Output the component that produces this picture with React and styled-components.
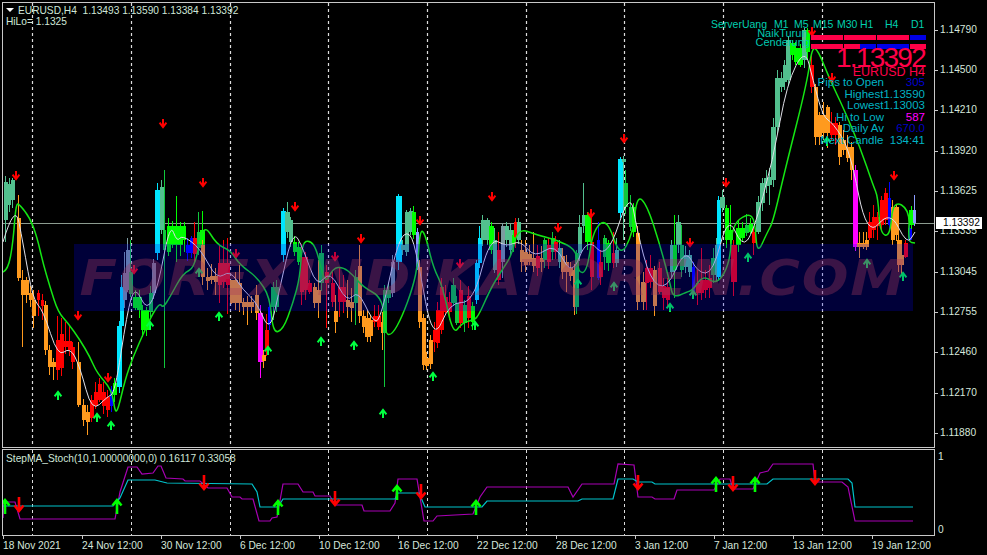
import React from 'react';
import styled, { createGlobalStyle } from 'styled-components';

const GlobalStyle = createGlobalStyle`
  html, body {
    margin: 0;
    background: #000;
    overflow: hidden;
  }
`;

const UI_FONT = '"Liberation Sans", Arial, sans-serif';

const Terminal = styled.div`
  width: 987px;
  height: 555px;
  padding: 2px 0 0 2px;
  box-sizing: border-box;
  background: #000;
  font-family: ${UI_FONT};
  font-size: 10.2px;
  color: #d6e6dc;
  display: flex;
  flex-direction: column;
`;

const PaneRow = styled.div`
  display: flex;
  margin-bottom: 1px;
`;

const Pane = styled.div`
  position: relative;
  width: 933px;
  height: ${(p) => p.$height}px;
  box-sizing: border-box;
  border: 1px solid #c8c8c8;
  overflow: hidden;
  svg {
    display: block;
  }
`;

const PriceAxis = styled.div`
  position: relative;
  height: 446px;
  padding-top: 7.85px;
  box-sizing: border-box;
  display: flex;
  flex-direction: column;
`;

const PriceTick = styled.div`
  position: relative;
  flex: none;
  height: 40.3px;
  line-height: 40.3px;
  padding-left: 5px;
  &::before {
    content: '';
    position: absolute;
    left: 0;
    top: 20px;
    width: 3px;
    height: 1px;
    background: #c8c8c8;
  }
`;

const CurrentPrice = styled.div`
  position: absolute;
  left: 1px;
  top: 215px;
  width: 46px;
  height: 12px;
  line-height: 12px;
  padding-left: 7px;
  box-sizing: border-box;
  background: #fff;
  color: #000;
`;

const SubAxis = styled.div`
  padding: 2px 0 0 3px;
  height: 87px;
  box-sizing: border-box;
  display: flex;
  flex-direction: column;
  justify-content: space-between;
  line-height: 12px;
`;

const TimeAxis = styled.div`
  display: grid;
  grid-template-columns: repeat(12, 79px);
  padding-left: 1px;
  margin-top: -1px;
`;

const TimeTick = styled.div`
  position: relative;
  padding-top: 3px;
  line-height: 13px;
  white-space: nowrap;
  &::before {
    content: '';
    position: absolute;
    left: 0;
    top: 0;
    width: 1px;
    height: 3px;
    background: #c8c8c8;
  }
`;

const Legend = styled.div`
  position: absolute;
  left: ${(p) => p.$left}px;
  top: ${(p) => p.$top}px;
  line-height: 12px;
  white-space: pre;
  color: #cfe6d8;
`;

const Caret = styled.span`
  display: inline-block;
  width: 0;
  height: 0;
  margin: 0 4px 2px 0;
  border-left: 4px solid transparent;
  border-right: 4px solid transparent;
  border-top: 4px solid #fff;
`;

const Band = styled.div`
  position: absolute;
  left: 71px;
  top: 241px;
  width: 839px;
  height: 67px;
  background: rgba(0, 0, 240, 0.24);
  display: flex;
  align-items: center;
  justify-content: center;
  overflow: hidden;
`;

const Watermark = styled.span`
  font-family: "DejaVu Sans", sans-serif;
  font-weight: 700;
  font-style: italic;
  font-size: 50px;
  letter-spacing: 1.6px;
  white-space: nowrap;
  transform: scaleX(1.1);
  color: rgba(165, 57, 94, 0.35);
`;

const Dashboard = styled.div`
  position: absolute;
  right: 9px;
  top: 17px;
  width: 216px;
  display: flex;
  flex-direction: column;
  align-items: flex-end;
  font-size: 11.5px;
  line-height: 11.6px;
  color: #00b4c4;
`;

const TimeframeRow = styled.div`
  display: grid;
  grid-template-columns: 63px 20px 19px 24px 23px 25px 26px auto;
  width: 211px;
  margin-right: 3px;
  font-size: 10.5px;
  line-height: 9px;
  color: #00d0b0;
`;

const SignalRow = styled.div`
  display: flex;
  align-items: flex-start;
  height: 8.5px;
  line-height: 8.5px;
  margin-right: -1px;
`;

const SignalName = styled.span`
  width: 52px;
  margin-right: 3px;
  font-size: 11px;
  color: #00c8b0;
  text-align: right;
  white-space: nowrap;
`;

const SignalCell = styled.span`
  width: 16px;
  height: 5px;
  margin: 6px 0.5px 0 0;
  background: ${(p) => (p.$up ? '#0000e6' : '#ff0048')};
`;

const BigPrice = styled.div`
  font-size: 28px;
  line-height: 18.5px;
  letter-spacing: -1.75px;
  margin-top: 2.5px;
  color: #ff0048;
`;

const PairName = styled.div`
  font-size: 12.5px;
  line-height: 10px;
  color: #ff0048;
`;

const StatRow = styled.div`
  display: flex;
  justify-content: flex-end;
  white-space: pre;
`;

const StatValue = styled.span`
  width: 41px;
  text-align: right;
  color: ${(p) => p.$color || 'inherit'};
`;

const COL = {
  s: '#52c08e',
  o: '#ff9a1e',
  r: '#ff0000',
  L: '#00ff00',
  g: '#10c83c',
  c: '#00e6ff',
  m: '#ff00ff',
  b: '#0000ff',
  w: '#8c9cff',
  v: '#7c9ca0',
};

// x, width, body top, body bottom, colour, wick top, wick bottom (page pixels)
const CANDLES = [
  [4, 3, 182, 220, 's', 176, 242], [8, 2, 184, 205, 's', 178], [11, 3, 180, 200, 's', 178], [17, 3, 218, 278, 'o', 195],
  [21, 3, 280, 295, 'o', 270, 347], [25, 3, 280, 295, 'o'], [29, 3, 293, 300, 'o'], [32, 3, 300, 316, 'o', 290, 328],
  [37, 2, 293, 300, 'r', 290, 316], [41, 2, 300, 306, 'r', 294, 320], [44, 3, 305, 350, 'o'], [48, 3, 350, 367, 'o', 345, 375],
  [52, 3, 362, 367, 'o', 358, 380], [56, 3, 340, 370, 'r', 316, 380], [60, 3, 334, 368, 'r', 318], [64, 3, 341, 347, 'r', 322],
  [68, 3, 341, 350, 'r', 326], [71, 3, 347, 362, 'r', 342], [77, 3, 362, 405, 'o', 342], [82, 3, 405, 420, 'o'],
  [86, 3, 412, 422, 'o', 405, 435], [90, 3, 400, 418, 'r', 395], [94, 3, 392, 406, 'r', 382], [98, 3, 384, 400, 'r', 378],
  [102, 3, 392, 406, 'r', 382], [106, 3, 397, 410, 'r', 390], [110, 2, 390, 406, 'b'], [113, 3, 383, 395, 'L', 378],
  [117, 4, 326, 387, 'c'], [120, 3, 287, 326, 'c', 275], [123, 3, 273, 300, 'v', 252], [126, 3, 250, 290, 'v', 238],
  [129, 3, 272, 294, 'g', 240], [133, 4, 297, 308, 'L', 290], [137, 4, 297, 310, 'L'], [141, 3, 310, 330, 'L'],
  [145, 3, 310, 330, 'L'], [149, 3, 293, 312, 'g'], [152, 3, 263, 293, 'v'], [155, 4, 190, 253, 'c'],
  [160, 3, 187, 230, 's', 180], [163, 2, 230, 250, 'g', 170, 368], [167, 3, 226, 252, 'L', 218], [171, 3, 226, 245, 'L'],
  [175, 3, 226, 245, 'L', 196, 262], [179, 3, 226, 245, 'L', 222, 256], [183, 2, 226, 240, 'L', 222, 252], [186, 3, 245, 253, 'b', 238],
  [190, 3, 238, 253, 'b', 236, 258], [193, 3, 238, 254, 'r', 222], [197, 3, 232, 248, 'g', 212], [200, 4, 230, 245, 'L', 211],
  [201, 3, 245, 277, 'o', 240, 285], [206, 3, 277, 281, 'o', 268, 290], [210, 3, 276, 280, 'o', 264, 284], [214, 3, 276, 282, 'o', 268, 295],
  [218, 3, 263, 285, 'r', 245, 303], [222, 3, 263, 282, 'r', 240], [226, 3, 263, 285, 'r', 238, 314], [230, 3, 280, 303, 'o', 280, 304],
  [234, 3, 280, 303, 'o', 272, 310], [238, 3, 283, 303, 'o', 265, 312], [242, 3, 302, 307, 'o'], [246, 3, 302, 307, 'o', 296, 325],
  [250, 3, 302, 307, 'o', 296], [255, 3, 295, 313, 'o', 285, 320], [258, 4, 313, 362, 'm', 305, 378], [262, 3, 355, 361, 'o', 350, 368],
  [265, 3, 330, 350, 'r', 314, 356], [268, 2, 307, 325, 'b'], [271, 4, 287, 307, 'g', 282, 320], [275, 3, 287, 307, 'g'],
  [281, 4, 211, 255, 'c', 208], [285, 4, 212, 232, 's', 202], [289, 3, 220, 242, 's'], [293, 3, 242, 252, 'L', 236],
  [297, 3, 247, 262, 'L'], [300, 3, 257, 292, 'r', 244, 305], [304, 3, 257, 290, 'r', 252, 300], [308, 3, 283, 292, 'r', 280],
  [313, 3, 287, 303, 'o', 283, 308], [317, 3, 290, 303, 'o', 260, 318], [319, 4, 253, 283, 'g', 245], [325, 3, 272, 283, 'r', 265, 328],
  [331, 3, 283, 302, 'r', 272], [334, 3, 311, 322, 'o', 295, 333], [338, 3, 287, 302, 'r', 268, 317], [342, 3, 287, 302, 'r', 275, 313],
  [346, 3, 300, 307, 'o', 280, 318], [350, 3, 302, 308, 'o', 288, 322], [354, 3, 277, 303, 'g', 270, 325], [358, 3, 266, 316, 'o', 245],
  [362, 3, 316, 327, 'o', 310], [365, 4, 318, 337, 'o', 310, 342], [369, 3, 320, 336, 'o', 315, 342], [373, 3, 316, 322, 'r', 305, 327],
  [377, 3, 316, 327, 'r', 305, 330], [381, 3, 322, 333, 'o', 312, 350], [383, 3, 290, 333, 'g', 285, 387], [387, 3, 290, 298, 'g', 284],
  [391, 3, 262, 293, 'v', 255], [396, 5, 196, 262, 'c'], [401, 3, 245, 250, 's', 240], [405, 3, 212, 252, 's', 210], [409, 3, 211, 232, 's', 208],
  [412, 3, 212, 235, 'L'], [416, 2, 232, 267, 'w', 228], [418, 3, 267, 322, 'o', 260], [422, 3, 318, 365, 'o'], [425, 3, 358, 366, 'o', 352, 370],
  [429, 3, 340, 364, 'o', 335], [433, 3, 330, 342, 'r', 322, 352], [436, 3, 310, 343, 'r', 302], [440, 3, 287, 330, 'r', 278], [444, 3, 297, 312, 'r', 285],
  [448, 3, 302, 312, 'r', 292, 320], [451, 4, 285, 303, 'g', 278], [455, 3, 303, 323, 'g'], [459, 3, 290, 323, 'r', 280, 328], [463, 3, 305, 323, 'g', 300, 332],
  [467, 3, 296, 318, 'r', 286, 328], [471, 3, 306, 322, 'L', 302, 330], [475, 3, 263, 300, 'c'], [478, 3, 238, 263, 'c', 226], [481, 3, 220, 240, 's', 215],
  [485, 4, 220, 240, 's', 218], [489, 4, 226, 250, 'L', 222], [493, 3, 240, 270, 's', 228], [497, 3, 250, 280, 'r', 232, 285], [501, 3, 226, 262, 'v', 223, 278],
  [505, 3, 226, 240, 's', 222], [509, 3, 230, 250, 's', 224], [512, 3, 235, 245, 'L', 230], [514, 3, 222, 237, 'r', 218, 248], [517, 3, 222, 240, 's', 218],
  [520, 3, 250, 262, 'o', 240, 272], [524, 3, 252, 265, 'o', 240, 272], [528, 3, 254, 262, 'o', 245], [532, 3, 258, 266, 'o', 232, 272], [536, 3, 256, 268, 'r', 245],
  [540, 3, 258, 262, 'o', 246, 272], [543, 3, 240, 260, 'g', 238, 268], [547, 3, 245, 262, 'r', 238], [551, 3, 238, 252, 'g', 232, 260], [554, 3, 242, 252, 'r', 236],
  [558, 3, 248, 262, 's', 240, 268], [561, 3, 256, 272, 'o', 248], [565, 3, 262, 272, 'o', 255, 292], [569, 3, 268, 276, 'o', 262], [573, 3, 270, 307, 'o', 264, 315],
  [575, 3, 253, 307, 'g', 250], [578, 3, 227, 253, 's', 215], [582, 3, 215, 226, 's', 183], [585, 5, 215, 242, 'L', 212], [590, 3, 242, 277, 'r', 212, 290],
  [597, 2, 240, 278, 'b', 222, 280], [599, 3, 262, 277, 'r', 250], [603, 3, 238, 257, 'g', 235, 270], [606, 4, 243, 263, 'L', 240], [612, 3, 253, 263, 'r', 232, 268],
  [615, 3, 250, 263, 's', 238], [618, 4, 159, 213, 'c'], [622, 3, 159, 162, 's', 156, 240], [624, 3, 183, 207, 'g', 170], [629, 3, 207, 227, 'g', 195],
  [632, 3, 207, 232, 'L'], [636, 3, 233, 302, 'o', 226, 310], [641, 4, 282, 302, 'o', 272], [645, 3, 268, 283, 'r', 260, 310], [649, 3, 268, 282, 'r', 255],
  [653, 3, 270, 306, 'o', 266, 316], [658, 3, 268, 292, 'r', 262], [662, 3, 286, 298, 'r', 278, 310], [666, 3, 287, 300, 'r', 278, 308], [670, 3, 245, 272, 's', 240],
  [673, 3, 245, 270, 'L', 215, 298], [676, 4, 222, 245, 's', 215], [680, 3, 245, 270, 'g', 225], [684, 3, 255, 267, 's', 246], [688, 3, 255, 272, 's', 250],
  [692, 2, 267, 293, 'b', 262, 298], [696, 3, 283, 293, 'r', 270, 305], [700, 3, 280, 293, 'r', 248, 300], [704, 3, 280, 290, 'r', 270, 298], [708, 3, 278, 288, 'r', 265, 298],
  [711, 4, 258, 275, 'g', 248], [715, 3, 245, 275, 's', 238], [717, 3, 200, 277, 'c', 196], [720, 4, 197, 208, 's', 190], [725, 3, 208, 240, 'L', 205],
  [729, 3, 230, 240, 'L', 205], [731, 5, 245, 282, 'r', 240, 296], [736, 4, 228, 245, 'L', 220], [741, 3, 228, 238, 'L', 222], [745, 3, 225, 233, 'g', 214],
  [749, 3, 224, 232, 'L', 218], [752, 3, 232, 243, 'r', 228, 255], [756, 4, 202, 232, 's', 196], [760, 4, 183, 203, 's', 178], [764, 4, 178, 186, 's', 170],
  [768, 3, 177, 185, 's', 168, 205], [771, 4, 127, 180, 's', 118], [775, 4, 78, 127, 's', 70], [779, 4, 78, 87, 's', 72, 92], [783, 3, 65, 82, 's', 60, 90],
  [786, 4, 40, 80, 's', 36], [790, 4, 43, 55, 'L', 40, 60], [794, 3, 48, 62, 'L', 42], [798, 4, 48, 65, 'L', 44], [802, 4, 30, 60, 's', 28], [806, 3, 30, 52, 'L', 28],
  [810, 3, 65, 87, 'r', 55], [814, 3, 87, 137, 'o', 84, 145], [818, 3, 115, 137, 'o', 112, 145], [822, 3, 115, 133, 'o', 102, 140], [826, 3, 107, 133, 'o', 105, 148],
  [830, 3, 123, 135, 'r', 112, 140], [834, 3, 123, 135, 'r', 117, 145], [838, 3, 125, 157, 'o', 122, 165], [842, 3, 140, 150, 'o', 130], [846, 3, 147, 158, 'o', 135],
  [850, 3, 147, 170, 'o', 142, 180], [853, 4, 170, 247, 'm', 165], [857, 4, 243, 247, 'o', 232, 258], [861, 4, 243, 247, 'o', 232], [865, 3, 240, 247, 'o', 232, 250],
  [868, 3, 222, 238, 'r', 212], [872, 3, 217, 230, 'r', 205], [876, 3, 217, 226, 'r', 212, 240], [880, 3, 200, 225, 'r', 196], [884, 3, 193, 220, 'r', 188], [888, 2, 198, 225, 'b', 182],
  [891, 3, 207, 240, 'o', 200], [894, 4, 207, 235, 'o', 204], [897, 3, 240, 265, 'o'], [900, 3, 255, 265, 'o', 240, 275], [904, 3, 243, 257, 'r', 240, 258], [908, 3, 228, 240, 'b', 218, 242],
  [909, 4, 210, 225, 'L', 206], [913, 2, 210, 223, 'w', 195],
];

const GREEN_MA = [[3, 272], [8, 270], [13, 243], [16, 203], [20, 205], [30, 218], [37, 237], [43, 263], [50, 287], [58, 312], [68, 323], [80, 340], [90, 357], [97, 373], [112, 390], [115, 412], [118, 410], [125, 380], [133, 357], [145, 330], [153, 313], [160, 303], [163, 308], [170, 297], [183, 273], [195, 268], [203, 222], [217, 245], [230, 250], [240, 265], [257, 277], [270, 297], [273, 333], [283, 330], [293, 303], [300, 277], [302, 243], [310, 240], [317, 250], [325, 285], [333, 268], [343, 267], [353, 275], [363, 287], [383, 298], [385, 334], [392, 335], [402, 317], [413, 287], [418, 263], [420, 230], [425, 233], [433, 267], [443, 287], [453, 335], [462, 323], [473, 320], [478, 317], [490, 290], [500, 273], [512, 255], [518, 228], [537, 235], [557, 240], [577, 250], [578, 273], [587, 272], [593, 230], [607, 218], [620, 258], [633, 233], [637, 195], [647, 205], [660, 245], [670, 283], [673, 298], [687, 292], [693, 290], [703, 275], [717, 285], [730, 263], [732, 225], [748, 213], [755, 220], [757, 255], [767, 233], [773, 222], [785, 170], [807, 83], [812, 47], [818, 50], [830, 80], [843, 107], [860, 147], [873, 185], [878, 197], [880, 233], [890, 237], [893, 200], [910, 210], [908, 242], [915, 243]];

const WHITE_MA = [[3, 242], [15, 202], [23, 243], [33, 300], [43, 310], [58, 357], [70, 347], [80, 367], [92, 412], [107, 397], [115, 393], [127, 313], [135, 285], [147, 312], [158, 287], [170, 223], [177, 242], [182, 235], [200, 248], [217, 280], [230, 270], [243, 290], [257, 303], [270, 333], [280, 287], [293, 230], [303, 248], [317, 288], [330, 270], [347, 303], [358, 290], [372, 320], [380, 322], [398, 240], [410, 230], [418, 260], [433, 343], [450, 302], [473, 303], [490, 237], [507, 247], [520, 240], [535, 258], [555, 243], [572, 277], [587, 237], [607, 260], [630, 190], [637, 230], [650, 280], [667, 290], [685, 248], [698, 273], [713, 273], [728, 215], [742, 247], [753, 233], [773, 160], [787, 83], [805, 48], [813, 80], [823, 117], [833, 123], [850, 150], [867, 238], [890, 210], [907, 245], [915, 232]];

const STOCH_PURPLE = [[3, 518], [4, 502], [15, 502], [20, 519], [115, 519], [120, 492], [128, 467], [137, 467], [142, 474], [153, 473], [158, 466], [161, 466], [166, 478], [183, 479], [185, 481], [200, 481], [208, 488], [227, 488], [232, 497], [240, 497], [242, 499], [253, 499], [259, 521], [270, 521], [272, 518], [277, 517], [283, 484], [298, 484], [303, 492], [313, 492], [315, 496], [330, 496], [335, 505], [362, 505], [364, 511], [390, 511], [395, 503], [398, 479], [417, 479], [424, 521], [433, 521], [437, 516], [473, 514], [480, 497], [487, 487], [568, 487], [573, 497], [582, 484], [614, 484], [618, 464], [634, 465], [638, 497], [652, 497], [655, 499], [674, 499], [677, 490], [714, 490], [720, 479], [730, 479], [733, 489], [753, 489], [760, 473], [768, 471], [773, 464], [813, 464], [815, 482], [842, 482], [848, 487], [855, 521], [913, 521]];

const STOCH_CYAN = [[3, 506], [113, 506], [120, 498], [128, 480], [155, 480], [167, 483], [252, 484], [257, 492], [260, 507], [278, 507], [283, 499], [395, 499], [398, 493], [419, 493], [425, 507], [482, 507], [487, 501], [578, 501], [582, 499], [613, 499], [618, 479], [633, 479], [638, 482], [652, 482], [655, 484], [767, 484], [773, 479], [848, 479], [852, 483], [855, 507], [913, 507]];

const RED_ARROWS = [[16, 175], [78, 315], [108, 377], [134, 269], [163, 123], [203, 182], [236, 253], [295, 206], [335, 256], [361, 238], [420, 220], [460, 263], [492, 196], [558, 227], [591, 213], [624, 138], [690, 242], [726, 182], [894, 175], [812, 31], [832, 77]];
const GREEN_ARROWS = [[58, 396], [97, 418], [111, 426], [150, 326], [199, 273], [219, 317], [268, 351], [321, 342], [354, 346], [383, 414], [433, 377], [475, 326], [578, 284], [614, 287], [670, 308], [693, 295], [748, 258], [867, 264], [903, 277], [827, 142]];
const SUB_GREEN = [[5, 507], [117, 507], [278, 508], [397, 493], [476, 508], [716, 485], [755, 485]];
const SUB_RED = [[19, 504], [204, 482], [335, 498], [421, 491], [638, 482], [733, 483], [815, 477]];

const GRID_X = [32, 131, 230, 328, 427, 526, 624, 723, 822];
const PRICES = ['1.14790', '1.14500', '1.14210', '1.13920', '1.13625', '1.13335', '1.13045', '1.12755', '1.12460', '1.12170', '1.11880'];
const TIMES = ['18 Nov 2021', '24 Nov 12:00', '30 Nov 12:00', '6 Dec 12:00', '10 Dec 12:00', '16 Dec 12:00', '22 Dec 12:00', '28 Dec 12:00', '3 Jan 12:00', '7 Jan 12:00', '13 Jan 12:00', '19 Jan 12:00'];
const SIGNAL_UP_1 = [false, false, false, false, false, false, true];
const SIGNAL_UP_2 = [false, false, false, true, true, true, false];

// rounds the corners of a moving average line
function smooth(points) {
  let d = `M${points[0][0]} ${points[0][1]}`;
  for (let i = 1; i < points.length - 1; i++) {
    const [x, y] = points[i];
    const [nx, ny] = points[i + 1];
    d += ` Q${x} ${y} ${(x + nx) / 2} ${(y + ny) / 2}`;
  }
  const last = points[points.length - 1];
  return `${d} L${last[0]} ${last[1]}`;
}

function Candle({ data }) {
  const [x, w, top, bottom, c, wickTop, wickBottom] = data;
  const mid = x + Math.floor(w / 2);
  const hi = wickTop ?? top - (2 + (x * 7) % 6);
  const lo = wickBottom ?? bottom + (2 + (x * 5) % 7);
  return (
    <g fill={COL[c]} shapeRendering="crispEdges">
      <rect x={mid} y={hi} width="1" height={lo - hi} />
      <rect x={x} y={top} width={w + 1} height={bottom - top} />
    </g>
  );
}

// wingdings style signal arrow, dir 1 points down and -1 points up
function Arrow({ x, y, dir, color, big }) {
  const h = big ? 7 : 4;
  const w = big ? 4.5 : 3.4;
  return (
    <path
      d={`M${x} ${y - dir * h} V${y + dir * h} M${x - w} ${y + dir * (h - w - 1)} L${x} ${y + dir * h} L${x + w} ${y + dir * (h - w - 1)}`}
      fill="none"
      stroke={color}
      strokeWidth={big ? 2.6 : 2}
    />
  );
}

function GridLines({ top, bottom, width }) {
  return GRID_X.map((x) => (
    <line key={x} x1={x + 0.5} x2={x + 0.5} y1={top} y2={bottom} stroke="#dcdcdc" strokeWidth={width} strokeDasharray="3 3" />
  ));
}

function MainChart() {
  return (
    <svg width="931" height="444" viewBox="3 3 931 444">
      <GridLines top={3} bottom={447} width={1.2} />
      <line x1="3" x2="934" y1="223.5" y2="223.5" stroke="#8c9c90" />
      {CANDLES.map((c, i) => <Candle key={i} data={c} />)}
      <path d={smooth(GREEN_MA)} fill="none" stroke="#14e614" strokeWidth="1.5" />
      <path d={smooth(WHITE_MA)} fill="none" stroke="#e0e0e8" strokeWidth="1" />
      {RED_ARROWS.map(([x, y]) => <Arrow key={x} x={x} y={y} dir={1} color="#ff0000" />)}
      {GREEN_ARROWS.map(([x, y]) => <Arrow key={x} x={x} y={y} dir={-1} color="#00ff40" />)}
    </svg>
  );
}

function StochChart() {
  const line = (pts) => pts.map((p) => p.join(',')).join(' ');
  return (
    <svg width="931" height="85" viewBox="3 450 931 85">
      <GridLines top={450} bottom={535} width={1} />
      <polyline points={line(STOCH_PURPLE)} fill="none" stroke="#a800b4" strokeWidth="1.2" />
      <polyline points={line(STOCH_CYAN)} fill="none" stroke="#00c4cc" strokeWidth="1.2" />
      {SUB_GREEN.map(([x, y]) => <Arrow key={x} x={x} y={y} dir={-1} color="#00ff00" big />)}
      {SUB_RED.map(([x, y]) => <Arrow key={x} x={x} y={y} dir={1} color="#ff0000" big />)}
    </svg>
  );
}

function SignalBars({ name, ups }) {
  return (
    <SignalRow>
      <SignalName>{name}</SignalName>
      {ups.map((up, i) => <SignalCell key={i} $up={up} />)}
    </SignalRow>
  );
}

function Stat({ label, value, color }) {
  return (
    <StatRow>
      {label}
      <StatValue $color={color}>{value}</StatValue>
    </StatRow>
  );
}

export default function App() {
  return (
    <Terminal>
      <GlobalStyle />
      <PaneRow>
        <Pane $height={446}>
          <MainChart />
          <Band>
            <Watermark>FOREXINDIKATOREN.COM</Watermark>
          </Band>
          <Legend $left={3} $top={2}>
            <Caret />EURUSD,H4  1.13493 1.13590 1.13384 1.13392
          </Legend>
          <Legend $left={3} $top={13}>HiLo= 1.1325</Legend>
          <Dashboard>
            <TimeframeRow>
              <span>ServerUang</span>
              <span>M1</span>
              <span>M5</span>
              <span>M15</span>
              <span>M30</span>
              <span>H1</span>
              <span>H4</span>
              <span>D1</span>
            </TimeframeRow>
            <SignalBars name="NaikTurun" ups={SIGNAL_UP_1} />
            <SignalBars name="Cenderung" ups={SIGNAL_UP_2} />
            <BigPrice>1.13392</BigPrice>
            <PairName>EURUSD H4</PairName>
            <Stat label="Pips to Open" value="305" color="#0000d0" />
            <StatRow>Highest1.13590</StatRow>
            <StatRow>Lowest1.13003</StatRow>
            <Stat label="Hi to Low" value="587" color="#ff00ff" />
            <Stat label="Daily Av" value="670.0" color="#0000c0" />
            <StatRow>Next Candle  134:41</StatRow>
          </Dashboard>
        </Pane>
        <PriceAxis>
          {PRICES.map((p) => <PriceTick key={p}>{p}</PriceTick>)}
          <CurrentPrice>1.13392</CurrentPrice>
        </PriceAxis>
      </PaneRow>
      <PaneRow>
        <Pane $height={87}>
          <StochChart />
          <Legend $left={3} $top={3}>StepMA_Stoch(10,1.00000000,0) 0.16117 0.33058</Legend>
        </Pane>
        <SubAxis>
          <span>1</span>
          <span>0</span>
        </SubAxis>
      </PaneRow>
      <TimeAxis>
        {TIMES.map((t) => <TimeTick key={t}>{t}</TimeTick>)}
      </TimeAxis>
    </Terminal>
  );
}
